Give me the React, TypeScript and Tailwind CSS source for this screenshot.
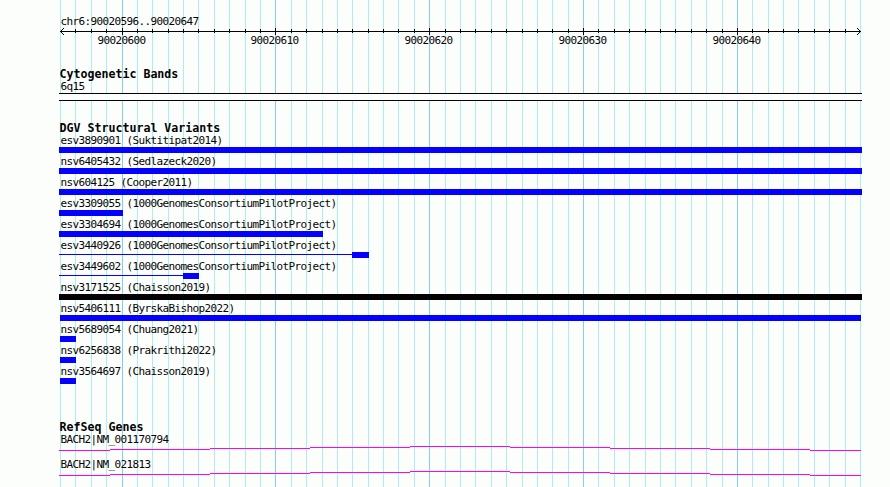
import type { ReactNode } from 'react'

/**
 * Genome browser panel: ruler, cytogenetic bands, structural variants and genes.
 * One base is 800 / 52 px wide, and the first base starts at x = 60.
 */

const REGION_START = 90020596
const BASES = 52
const LEFT = 60
const WIDTH = 800

const baseX = (i: number) => Math.round(LEFT + (i * WIDTH) / BASES)
const isMajor = (i: number) => (REGION_START + i) % 10 === 0

const positions = Array.from({ length: BASES + 1 }, (_, i) => i)

interface Variant {
  id: string
  study: string
  start: number
  end: number
  /** Where the thin connector line starts, if the feature has one */
  lineFrom?: number
  black?: boolean
}

const variants: Variant[] = [
  { id: 'esv3890901', study: 'Suktitipat2014', start: 59, end: 862 },
  { id: 'nsv6405432', study: 'Sedlazeck2020', start: 59, end: 862 },
  { id: 'nsv604125', study: 'Cooper2011', start: 59, end: 862 },
  { id: 'esv3309055', study: '1000GenomesConsortiumPilotProject', start: 59, end: 123 },
  { id: 'esv3304694', study: '1000GenomesConsortiumPilotProject', start: 59, end: 323 },
  { id: 'esv3440926', study: '1000GenomesConsortiumPilotProject', start: 352, end: 369, lineFrom: 59 },
  { id: 'esv3449602', study: '1000GenomesConsortiumPilotProject', start: 183, end: 199, lineFrom: 59 },
  { id: 'nsv3171525', study: 'Chaisson2019', start: 59, end: 862, black: true },
  { id: 'nsv5406111', study: 'ByrskaBishop2022', start: 60, end: 861 },
  { id: 'nsv5689054', study: 'Chuang2021', start: 60, end: 76 },
  { id: 'nsv6256838', study: 'Prakrithi2022', start: 60, end: 76 },
  { id: 'nsv3564697', study: 'Chaisson2019', start: 60, end: 76 },
]

const genes = ['BACH2|NM_001170794', 'BACH2|NM_021813']

// Intron hat, drawn as one-pixel steps: [x, width, y]
const intronSteps = [
  [59, 51, 4],
  [110, 100, 3],
  [210, 100, 2],
  [310, 100, 1],
  [410, 100, 0],
  [510, 100, 1],
  [610, 100, 2],
  [710, 100, 3],
  [810, 51, 4],
]

function Grid() {
  return (
    <svg className="absolute inset-0" width="890" height="487" shapeRendering="crispEdges">
      {positions.map((i) => (
        <rect key={i} x={baseX(i)} y="0" width="1" height="487" fill={isMajor(i) ? '#87ceeb' : '#afeeee'} />
      ))}
    </svg>
  )
}

function Ruler() {
  return (
    <svg className="block h-[67px] w-full" width="890" height="67" fill="#040204">
      <text x="60.4" y="25">
        chr6:90020596..90020647
      </text>
      <g shapeRendering="crispEdges">
        <rect x="60" y="31" width="801" height="1" />
        {positions.slice(1, -1).map((i) => (
          <rect
            key={i}
            x={baseX(i)}
            y={isMajor(i) ? 28 : 29}
            width="1"
            height={isMajor(i) ? 7 : 4}
          />
        ))}
        {/* arrow heads, stepped one pixel at a time */}
        {[1, 2, 3].map((d) => (
          <g key={d}>
            <rect x={60 + d} y={31 - d} width="1" height="1" />
            <rect x={60 + d} y={31 + d} width="1" height="1" />
            <rect x={860 - d} y={31 - d} width="1" height="1" />
            <rect x={860 - d} y={31 + d} width="1" height="1" />
          </g>
        ))}
      </g>
      {positions.filter(isMajor).map((i) => (
        <text key={i} x={baseX(i) - 24.6} y="44">
          {REGION_START + i}
        </text>
      ))}
    </svg>
  )
}

function TrackTitle({ children }: { children: ReactNode }) {
  return (
    <h2 className="h-[13px] pl-[59.4px] text-[11.63px] leading-[15px] font-bold tracking-normal">{children}</h2>
  )
}

function Label({ children }: { children: ReactNode }) {
  return <div className="h-[13px] pl-[60.4px] leading-[13px]">{children}</div>
}

function VariantRow({ variant }: { variant: Variant }) {
  const { id, study, start, end, lineFrom, black } = variant
  return (
    <div className="h-[21px]">
      <Label>
        {id} ({study})
      </Label>
      <div className="flex h-[6px]" style={{ paddingLeft: lineFrom ?? start }}>
        {lineFrom !== undefined && (
          <div className="mt-[2px] h-px bg-[#0402fc]" style={{ width: start - lineFrom }} />
        )}
        <div className={black ? 'h-full bg-[#040204]' : 'h-full bg-[#0402fc]'} style={{ width: end - start }} />
      </div>
    </div>
  )
}

function GeneRow({ name }: { name: string }) {
  return (
    <div className="h-[25px]">
      <Label>{name}</Label>
      <svg className="block" width="890" height="5" shapeRendering="crispEdges" fill="#fc02fc">
        {intronSteps.map(([x, width, y]) => (
          <rect key={x} x={x} y={y} width={width} height="1" />
        ))}
      </svg>
    </div>
  )
}

export default function App() {
  return (
    <div className="relative h-[487px] w-[890px] overflow-hidden bg-[#fcfefc] font-['DejaVu_Sans_Mono',monospace] text-[11px] tracking-[-0.622px] whitespace-pre text-[#040204]">
      <Grid />
      <div className="relative">
        <Ruler />

        <section className="mb-5">
          <TrackTitle>Cytogenetic Bands</TrackTitle>
          <Label>6q15</Label>
          <div className="ml-[59px] h-2 w-[803px] border-y border-[#040204] bg-[#fcfefc]" />
        </section>

        <section className="mb-[34px]">
          <TrackTitle>DGV Structural Variants</TrackTitle>
          {variants.map((variant) => (
            <VariantRow key={variant.id} variant={variant} />
          ))}
        </section>

        <section>
          <TrackTitle>RefSeq Genes</TrackTitle>
          {genes.map((name) => (
            <GeneRow key={name} name={name} />
          ))}
        </section>
      </div>
    </div>
  )
}
